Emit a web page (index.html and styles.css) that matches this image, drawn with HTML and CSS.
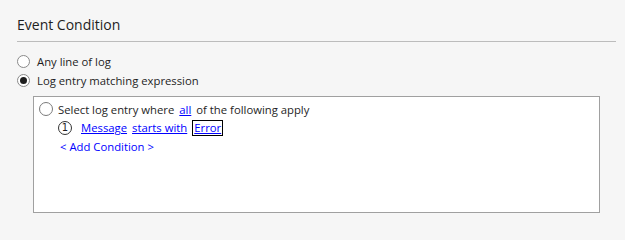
FILE: index.html
```html
<!DOCTYPE html>
<html>
<head>
<meta charset="utf-8">
<link rel="stylesheet" href="styles.css">
</head>
<body>
<div class="panel">
  <div class="title">Event Condition</div>
  <div class="options">
    <div class="opt"><span class="radio"></span><span>Any line of log</span></div>
    <div class="opt"><span class="radio checked"></span><span>Log entry matching expression</span></div>
  </div>
  <div class="box">
    <div class="row first">
      <span class="bigradio"></span>
      <span>Select log entry where</span>
      <a class="link">all</a>
      <span>of the following apply</span>
    </div>
    <div class="row second">
      <span class="num">1</span>
      <a class="link">Message</a>
      <a class="link">starts with</a>
      <a class="link focus">Error</a>
    </div>
    <div class="row third">
      <span class="add">&lt; Add Condition &gt;</span>
    </div>
  </div>
</div>
</body>
</html>
```

FILE: styles.css
```css
html, body {
  margin: 0;
  padding: 0;
  background: #f6f6f6;
}
body {
  font-family: "Open Sans", "Noto Sans", sans-serif;
  font-size: 11.3px;
  color: #1e1e1e;
  width: 625px;
  height: 233px;
  overflow: hidden;
}
.panel {
  padding: 14px 9px 0 17px;
}
.title {
  font-size: 14px;
  color: #1e1e1e;
  line-height: 22px;
  height: 27px;
  border-bottom: 1px solid #bcbcbc;
}
.options {
  display: flex;
  flex-direction: column;
  padding-top: 10px;
}
.opt {
  display: flex;
  align-items: center;
  height: 19px;
  gap: 7px;
}
.radio {
  width: 11px;
  height: 11px;
  border: 1px solid #8a8a8a;
  border-radius: 50%;
  background: #fff;
  display: flex;
  align-items: center;
  justify-content: center;
}
.radio.checked::after {
  content: "";
  width: 7px;
  height: 7px;
  border-radius: 50%;
  background: #1e1e1e;
}
.box {
  margin: 6px 16px 0 16px;
  height: 117px;
  box-sizing: border-box;
  border: 1px solid #a0a0a0;
  background: #fff;
  padding: 3px 0 0 5px;
}
.row {
  display: flex;
  align-items: center;
  gap: 5px;
  height: 18px;
}
.row.second {
  margin-top: 0;
  padding-left: 19px;
  height: 19px;
}
.row.third {
  margin-top: 0;
  padding-left: 21px;
}
.bigradio {
  width: 12px;
  height: 12px;
  border: 1px solid #7a7a7a;
  border-radius: 50%;
  background: #fff;
}
.num {
  width: 12px;
  height: 12px;
  border: 1px solid #333;
  border-radius: 50%;
  font-family: "DejaVu Sans", "Liberation Sans", sans-serif;
  font-size: 10px;
  line-height: 12px;
  text-align: center;
  margin-right: 4px;
}
.link {
  color: #0000ff;
  text-decoration: underline;
}
.focus {
  border: 1px solid #000;
  padding: 0 1px;
  line-height: 14px;
}
.add {
  color: #0000ff;
}
```
